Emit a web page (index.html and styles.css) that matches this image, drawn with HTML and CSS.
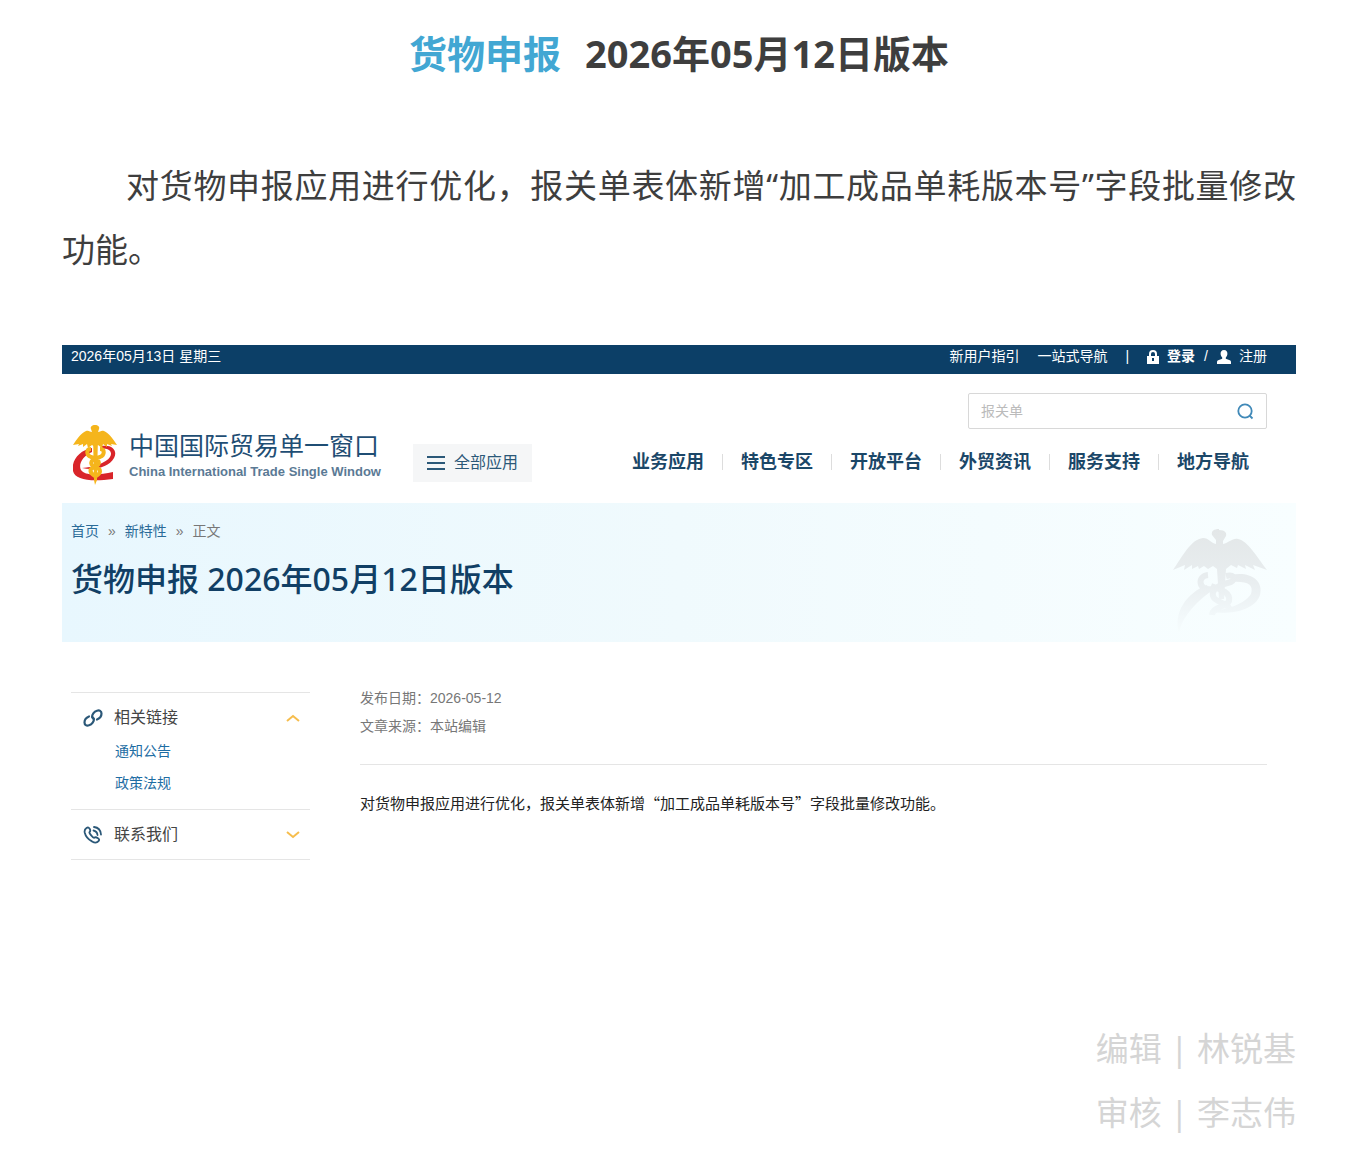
FILE: index.html
```
<!DOCTYPE html>
<html lang="zh-CN">
<head>
<meta charset="utf-8">
<meta name="viewport" content="width=device-width, initial-scale=1">
<title>货物申报 2026年05月12日版本</title>
<link rel="stylesheet" href="styles.css">
</head>
<body>
<main class="post">
  <h1 class="post-title"><span class="post-tag">货物申报</span><span>2026年05月12日版本</span></h1>
  <p class="post-text">对货物申报应用进行优化，报关单表体新增“加工成品单耗版本号”字段批量修改功能。</p>

  <section class="site">
    <div class="topbar">
      <span>2026年05月13日 星期三</span>
      <nav class="topbar-links">
        <a href="#">新用户指引</a>
        <a href="#">一站式导航</a>
        <span class="bar">|</span>
        <span class="account">
          <a class="login" href="#"><svg width="12" height="14" viewBox="0 0 12 14"><path d="M3 6V4a3 3 0 0 1 6 0v2" fill="none" stroke="#fff" stroke-width="2"/><path d="M0 6h12v8H0z" fill="#fff"/><path d="M6 8v3" stroke="#0c3f67" stroke-width="2"/></svg>登录</a>
          <span>/</span>
          <a href="#"><svg width="14" height="14" viewBox="0 0 14 14"><path d="M7 0c2.400 0 3.600 1.700 3.400 4-.1 1.500-.8 2.600-1.600 3.400v1.400l4 1.500c.8.400 1.200 1 1.200 2V14H0v-1.700c0-1 .4-1.600 1.200-2l4-1.500V7.400C4.400 6.600 3.700 5.500 3.600 4 3.400 1.700 4.600 0 7 0z" fill="#fff"/></svg>注册</a>
        </span>
      </nav>
    </div>

    <header class="site-head">
      <div class="brand-row">
        <a class="brand" href="#">
          <svg class="emblem" width="44" height="60" viewBox="0 0 44 60">
            <path d="M29 21C39 19 45 26 41 33C36 42 22 46 9 43C21 42 33 38 37 32C40 27 36 23 29 24Z" fill="#d9252a"/>
            <path d="M19 23C7 25-2 35 0 46C2 55 18 57 40 54V47C26 50 12 51 8 45C5 39 10 31 19 27Z" fill="#d9252a"/>
            <path d="M20 10h5l-1 45-2 5-1-5z" fill="#f5b51c"/>
            <path d="M22 0c3 0 5 2 4 4l-1 3c2 0 3-2 6-1 5 2 9 8 13 14l-6-1 1 2-5-2v3l-4-3-1 4-4-3-3 2-3-2-4 3-1-4-4 3v-3l-5 2 1-2-6 1C4 14 8 8 13 6c3-1 4 1 6 1l-1-3c-1-2 1-4 4-4z" fill="#f5b51c"/>
            <path d="M18 24c-5 0-5 6 0 8 8 2 11 7 4 10-7 2-5 6 0 9M27 24c5 0 5 6 0 8-9 2-12 7-5 10 7 2 6 6 1 9" fill="none" stroke="#f5b51c" stroke-width="4"/>
          </svg>
          <span class="brand-name"><strong>中国国际贸易单一窗口</strong><small>China International Trade Single Window</small></span>
        </a>
        <button class="all-apps" type="button"><svg width="18" height="14" viewBox="0 0 18 14"><path d="M0 1h18M0 7h18M0 13h18" stroke="#2b5878" stroke-width="2"/></svg>全部应用</button>
      </div>
      <div class="head-side">
        <form class="search">
          <input type="search" aria-label="搜索" placeholder="报关单">
          <button type="button" aria-label="搜索"><svg width="18" height="18" viewBox="0 0 18 18"><circle cx="9" cy="9" r="6.700" fill="none" stroke="#4089b8" stroke-width="1.800"/><path d="M13.500 13.500l3 3" stroke="#4089b8" stroke-width="1.800"/></svg></button>
        </form>
        <nav class="main-nav">
          <a href="#">业务应用</a><a href="#">特色专区</a><a href="#">开放平台</a><a href="#">外贸资讯</a><a href="#">服务支持</a><a href="#">地方导航</a>
        </nav>
      </div>
    </header>

    <div class="banner">
      <div>
        <nav class="crumbs"><a href="#">首页</a><span>»</span><a href="#">新特性</a><span>»</span><span>正文</span></nav>
        <h2>货物申报 2026年05月12日版本</h2>
      </div>
      <svg class="watermark" width="94" height="108" viewBox="0 0 94 108">
        <defs><linearGradient id="fade" x1="0" y1="0" x2="0" y2="108" gradientUnits="userSpaceOnUse"><stop offset="0" stop-color="#e3e7e8"/><stop offset=".5" stop-color="#e9eef0"/><stop offset=".8" stop-color="#f2f8fa"/><stop offset="1" stop-color="#f7fdfe"/></linearGradient></defs>
        <path d="M46 1c6 0 8 3 7 6l-3 5v3c6-1 9-6 15-5 10 2 19 18 29 31l-14-5 2 5-10-5 1 4-8-4-1 3-6-3-5 4-2 30h-5l-2-30-4-3-5 3-4-3-5 3-1-3-6 3v-4l-8 5 1-5-12 5c9-13 18-31 30-32 6 0 8 5 13 6v-4l-4-5c-1-4 2-6 7-6z" fill="url(#fade)"/>
        <path d="M58 46C75 42 91 50 87 66C82 81 59 86 37 83C55 80 72 75 78 65C81 55 74 52 58 53Z" fill="url(#fade)"/>
        <path d="M34 56C14 64 0 83 6 104C8 92 17 78 37 63Z" fill="url(#fade)"/>
        <path d="M39 60c-14 2-15-13-4-14M53 47c8-2 10 3 5 6-12 3-22 8-17 16 4 5 15 5 16 13M38 57c8 3 20 6 18 15-3 7-16 5-17 14" fill="none" stroke="url(#fade)" stroke-width="6"/>
      </svg>
    </div>

    <div class="columns">
      <aside class="side">
        <section>
          <button class="side-head" type="button"><svg width="20" height="20" viewBox="0 0 20 20" fill="none" stroke="#2b5878" stroke-width="2.200" stroke-linecap="round"><path d="M6 8.500C3.500 9.500 1.500 12 1.500 14.500c0 2.500 2 3.500 4.500 2.800 3-.8 5.300-4 4.800-6.300-.2-1-.8-1.600-1.600-2"/><path d="M14 11.500c2.500-1 4.500-3.500 4.500-6 0-2.500-2-3.500-4.500-2.800-3 .8-5.300 4-4.800 6.300.2 1 .8 1.600 1.600 2"/></svg><span>相关链接</span><svg width="14" height="8" viewBox="0 0 14 8"><path d="M1 7l6-5 6 5" fill="none" stroke="#f6bd4d" stroke-width="2"/></svg></button>
          <ul><li><a href="#">通知公告</a></li><li><a href="#">政策法规</a></li></ul>
        </section>
        <section>
          <button class="side-head" type="button"><svg width="20" height="20" viewBox="0 0 20 20" fill="none" stroke="#2b5878" stroke-width="1.800" stroke-linejoin="round" stroke-linecap="round"><path d="M3.500 3c1.500-1 2.500-.5 3.300 1 .8 1.600.7 2.400-.4 3.300-.6.600 3.800 6 4.700 5.400 1.200-.8 2-.8 3.500.2 1.700 1.100 2 2 .9 3.300-1.500 1.700-3.800 1.800-6.500.2C5.500 14.500 2.500 11 1.700 7.500 1.300 5.500 2 4 3.500 3z"/><path d="M10.500 5.500c2.500.5 3.700 2 4 4.500M11 2c4 .5 6.700 3.300 7 7.500"/></svg><span>联系我们</span><svg width="14" height="8" viewBox="0 0 14 8"><path d="M1 1l6 5 6-5" fill="none" stroke="#f6bd4d" stroke-width="2"/></svg></button>
        </section>
      </aside>
      <article class="notice">
        <div class="meta"><p>发布日期：2026-05-12</p><p>文章来源：本站编辑</p></div>
        <p class="notice-text">对货物申报应用进行优化，报关单表体新增“加工成品单耗版本号”字段批量修改功能。</p>
      </article>
    </div>
  </section>

  <footer class="credits"><p>编辑 | 林锐基</p><p>审核 | 李志伟</p></footer>
</main>
</body>
</html>
```
FILE: styles.css
```
* { box-sizing: border-box; }
body, h1, h2, p, ul { margin: 0; padding: 0; }
body {
  background: #fff;
  color: #3e3e3e;
  font-family: "Noto Sans", "Noto Sans CJK SC", sans-serif;
}
a { color: inherit; text-decoration: none; }
button, input { font: inherit; border: 0; background: none; padding: 0; }
svg { flex: none; }
ul { list-style: none; }

.post { padding: 21px 52px 0 62px; }
.post-title {
  display: flex;
  align-items: baseline;
  justify-content: center;
  gap: 24px;
  font-size: 38px;
  line-height: 64px;
}
.post-tag { color: #42a7d3; }
.post-text {
  margin-top: 69px;
  font-size: 33px;
  line-height: 64px;
  text-indent: 64px;
  text-align: justify;
}

.site {
  margin-top: 63px;
  min-height: 640px;
  font-family: "Liberation Sans", "Noto Sans CJK SC", sans-serif;
  font-size: 14px;
}
.topbar {
  display: flex;
  justify-content: space-between;
  padding: 0 29px 6px 9px;
  background: #0c3f67;
  color: #fff;
  line-height: 23px;
}
.topbar-links, .account, .account a { display: flex; align-items: center; }
.topbar-links { gap: 18px; }
.account { gap: 9px; }
.account a { gap: 8px; }
.login { font-weight: 700; }

.site-head {
  display: flex;
  justify-content: space-between;
  padding: 19px 29px 18px 11px;
}
.brand-row { display: flex; align-items: center; gap: 32px; padding-top: 32px; }
.brand { display: flex; align-items: center; gap: 12px; color: #1f4e74; }
.brand-name { display: flex; flex-direction: column; padding-top: 4px; }
.brand-name strong { font-size: 25px; font-weight: 400; line-height: 30px; }
.brand-name small { color: #5b7a95; font-size: 13px; font-weight: 700; line-height: 22px; }
.all-apps {
  display: flex;
  align-items: center;
  gap: 9px;
  margin-top: 16px;
  padding: 0 14px;
  background: #f5f6f7;
  color: #2b5878;
  font-size: 16px;
  line-height: 38px;
}
.head-side { display: flex; flex-direction: column; align-items: flex-end; gap: 20px; }
.search {
  display: flex;
  align-items: center;
  width: 299px;
  height: 36px;
  padding: 0 12px;
  border: 1px solid #d8d8d8;
  border-radius: 2px;
}
.search input { flex: 1; min-width: 0; outline: 0; }
.search input::placeholder { color: #bbb; }
.search button { display: flex; }
.main-nav { display: flex; align-items: center; color: #1b4768; font-size: 18px; font-weight: 700; }
.main-nav a { padding: 0 18px; line-height: 26px; }
.main-nav a + a {
  background: linear-gradient(#ddd, #ddd) left center / 1px 16px no-repeat;
  padding-left: 19px;
}

.banner {
  display: flex;
  justify-content: space-between;
  padding: 16px 29px 0 9px;
  height: 139px;
  background: linear-gradient(90deg, #e8f7fe, #f0fafd 50%, #f8feff);
}
.crumbs { display: flex; gap: 9px; color: #777; line-height: 24px; }
.crumbs a { color: #2a6b98; }
.banner h2 {
  margin-top: 12px;
  color: #113f65;
  font-family: "Noto Sans", "Noto Sans CJK SC", sans-serif;
  font-size: 32px;
  font-weight: 500;
  line-height: 48px;
}
.watermark { margin-top: 10px; }

.columns { display: flex; gap: 50px; padding: 42px 29px 0 9px; }
.side { width: 239px; margin-top: 8px; border-bottom: 1px solid #e5e5e5; align-self: flex-start; }
.side section { border-top: 1px solid #e5e5e5; }
.side-head {
  display: flex;
  align-items: center;
  width: 100%;
  padding: 0 10px 0 12px;
  color: #444;
  font-size: 16px;
  line-height: 49px;
  text-align: left;
}
.side-head span { flex: 1; padding-left: 11px; }
.side ul { padding: 0 0 10px 44px; margin-top: -7px; color: #1e6da3; line-height: 32px; }
.notice { flex: 1; }
.meta { padding-bottom: 24px; border-bottom: 1px solid #e5e5e5; color: #777; line-height: 28px; }
.notice-text {
  margin-top: 24px;
  color: #222;
  font-family: "Noto Sans CJK SC", sans-serif;
  font-size: 15px;
  line-height: 28px;
}

.credits { margin-top: 32px; color: #d5d5d5; font-size: 33px; line-height: 64px; text-align: right; }
```
